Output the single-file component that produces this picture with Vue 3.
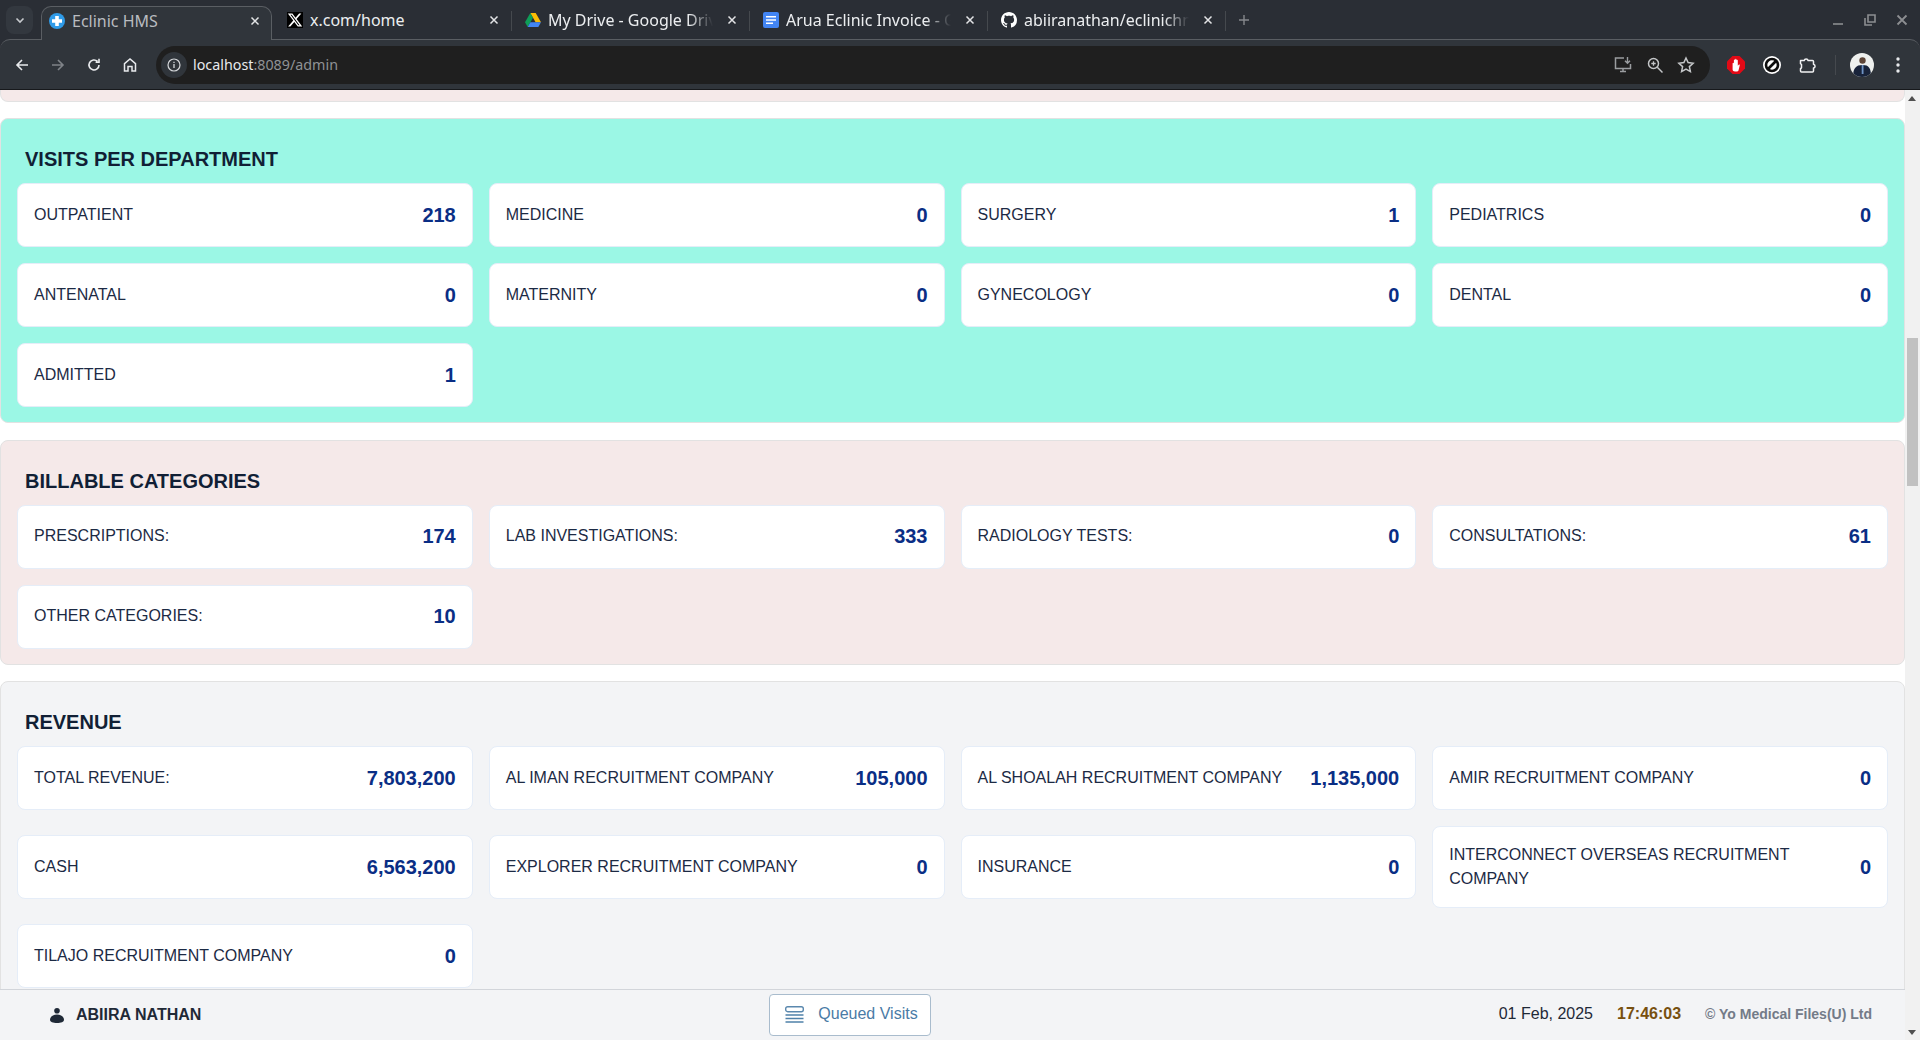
<template>
	<div class="window">
		<header class="chrome">
			<div class="tab-strip">
				<button class="tab-search">
					<svg width="12" height="12" viewBox="0 0 12 12"><path d="M2.5 4.5 6 8l3.5-3.5" fill="none" stroke="#c7cace" stroke-width="1.6" /></svg>
				</button>
				<div v-for="tab in tabs" :key="tab.title" class="tab" :class="{ active: tab.active }">
					<svg v-if="tab.icon === 'clinic'" class="favicon" viewBox="0 0 16 16">
						<circle cx="8" cy="8" r="8" fill="#2f9be8" />
						<path d="M6.2 3h3.6v3.2H13v3.6H9.8V13H6.2V9.8H3V6.2h3.2z" fill="#fff" />
					</svg>
					<svg v-else-if="tab.icon === 'x'" class="favicon" viewBox="0 0 24 24">
						<rect width="24" height="24" fill="#000" />
						<path d="M18.244 2.25h3.308l-7.227 8.26 8.502 11.24H16.17l-5.214-6.817L4.99 21.75H1.68l7.73-8.835L1.254 2.25H8.08l4.713 6.231zm-1.161 17.52h1.833L7.084 4.126H5.117z" fill="#fff" />
					</svg>
					<svg v-else-if="tab.icon === 'drive'" class="favicon" viewBox="0 0 16 14">
						<path d="M5.3 0h5.4l5.3 9.3h-5.4z" fill="#fbbc04" />
						<path d="M5.3 0 0 9.3l2.7 4.7 5.3-9.3z" fill="#0f9d58" />
						<path d="M2.7 14h10.6l2.7-4.7H5.4z" fill="#4285f4" />
					</svg>
					<svg v-else-if="tab.icon === 'docs'" class="favicon" viewBox="0 0 16 16">
						<rect width="16" height="16" rx="2" fill="#4285f4" />
						<path d="M3 4h10v1.6H3zM3 7.2h10v1.6H3zM3 10.4h7V12H3z" fill="#fff" />
					</svg>
					<svg v-else class="favicon" viewBox="0 0 16 16">
						<path fill="#fff" d="M8 0C3.58 0 0 3.58 0 8c0 3.54 2.29 6.53 5.47 7.59.4.07.55-.17.55-.38 0-.19-.01-.82-.01-1.49-2.01.37-2.53-.49-2.69-.94-.09-.23-.48-.94-.82-1.13-.28-.15-.68-.52-.01-.53.63-.01 1.08.58 1.23.82.72 1.21 1.87.87 2.33.66.07-.52.28-.87.51-1.07-1.78-.2-3.64-.89-3.64-3.95 0-.87.31-1.59.82-2.15-.08-.2-.36-1.02.08-2.12 0 0 .67-.21 2.2.82.64-.18 1.32-.27 2-.27.68 0 1.36.09 2 .27 1.53-1.04 2.2-.82 2.2-.82.44 1.1.16 1.92.08 2.12.51.56.82 1.27.82 2.15 0 3.07-1.87 3.75-3.65 3.95.29.25.54.73.54 1.48 0 1.07-.01 1.93-.01 2.2 0 .21.15.46.55.38A8.013 8.013 0 0016 8c0-4.42-3.58-8-8-8z" />
					</svg>
					<span class="tab-title" :class="{ fade: tab.fade }">{{ tab.title }}</span>
					<svg class="tab-close" width="10" height="10" viewBox="0 0 10 10"><path d="M1.5 1.5l7 7m0-7l-7 7" stroke="#e3e4e6" stroke-width="1.5" /></svg>
				</div>
				<svg class="new-tab" width="12" height="12" viewBox="0 0 12 12"><path d="M6 1v10M1 6h10" stroke="#85888c" stroke-width="1.4" /></svg>
				<div class="window-controls">
					<svg width="12" height="12" viewBox="0 0 12 12"><path d="M1 10h10" stroke="#8c8e91" stroke-width="1.6" /></svg>
					<svg width="12" height="12" viewBox="0 0 12 12"><path d="M4 1h7v7H4zM1 4v7h7" fill="none" stroke="#8c8e91" stroke-width="1.6" /></svg>
					<svg width="12" height="12" viewBox="0 0 12 12"><path d="M1.5 1.5l9 9m0-9l-9 9" stroke="#8c8e91" stroke-width="1.8" /></svg>
				</div>
			</div>
			<div class="toolbar">
				<div class="nav-buttons">
					<svg width="16" height="16" viewBox="0 0 16 16"><path d="M14 8H3M8 3 3 8l5 5" fill="none" stroke="#e8eaed" stroke-width="1.6" /></svg>
					<svg width="16" height="16" viewBox="0 0 16 16"><path d="M2 8h11M8 3l5 5-5 5" fill="none" stroke="#7f8388" stroke-width="1.6" /></svg>
					<svg width="16" height="16" viewBox="0 0 16 16"><path d="M13 8a5 5 0 1 1-1.5-3.6M13 1.8v3.4H9.6" fill="none" stroke="#e8eaed" stroke-width="1.6" /></svg>
					<svg width="16" height="16" viewBox="0 0 16 16"><path d="M2.5 14V6.6L8 2l5.5 4.6V14H10V9.5H6V14z" fill="none" stroke="#e8eaed" stroke-width="1.5" /></svg>
				</div>
				<div class="omnibox">
					<span class="site-info">
						<svg width="14" height="14" viewBox="0 0 14 14"><circle cx="7" cy="7" r="6" fill="none" stroke="#d5d7da" stroke-width="1.2" /><path d="M7 6v4M7 3.8V5" stroke="#d5d7da" stroke-width="1.3" /></svg>
					</span>
					<span class="url">localhost<span class="url-rest">:8089/admin</span></span>
					<div class="omni-actions">
						<svg width="20" height="20" viewBox="0 0 20 20"><path d="M11 3H2.5v10.5h15V9M7 16.5h6M10 14v2.5" fill="none" stroke="#9a9da0" stroke-width="1.5" /><path d="M14.5 2v6M12 5.8l2.5 2.5L17 5.8" fill="none" stroke="#9a9da0" stroke-width="1.4" /></svg>
						<svg width="18" height="18" viewBox="0 0 18 18"><circle cx="7.5" cy="7.5" r="5" fill="none" stroke="#c4c6c8" stroke-width="1.5" /><path d="M11.3 11.3 16.5 16.5" stroke="#c4c6c8" stroke-width="1.5" /><path d="M5.3 7.5h4.4M7.5 5.3v4.4" stroke="#c4c6c8" stroke-width="1.3" /></svg>
						<svg width="18" height="18" viewBox="0 0 18 18"><path d="M9 2l2.1 4.6 5 .6-3.7 3.4 1 5L9 13.1 4.6 15.6l1-5L1.9 7.2l5-.6z" fill="none" stroke="#c4c6c8" stroke-width="1.5" /></svg>
					</div>
				</div>
				<div class="extensions">
					<svg width="18" height="18" viewBox="0 0 18 18">
						<path d="M5.5 0h7L18 5.5v7L12.5 18h-7L0 12.5v-7z" fill="#e20a16" />
						<path d="M5.6 13.5V7.5c0-1 1.3-1 1.3 0V4.3c0-1 1.3-1 1.3 0V3.5c0-1 1.3-1 1.3 0v1c0-.9 1.3-.9 1.3 0v5.3l.9-1c.6-.6 1.4 0 1 .7L11.5 14.5c-.5.7-1 1-2 1H8c-1.4 0-2.4-.8-2.4-2z" fill="#fff" />
					</svg>
					<svg width="18" height="18" viewBox="0 0 18 18"><circle cx="9" cy="9" r="9" fill="#fff" /><circle cx="9" cy="9" r="6" fill="none" stroke="#0d0d0d" stroke-width="2.6" /><path d="M5 13l8-8" stroke="#0d0d0d" stroke-width="2.6" /></svg>
					<svg width="18" height="18" viewBox="0 0 18 18"><path d="M1.5 4.5h3.7a2 2 0 0 1 3.9 0h4.4a1 1 0 0 1 1 1v2.7a2 2 0 0 1 0 3.9v3a1 1 0 0 1-1 1H2.5a1 1 0 0 1-1-1v-2.5l1-.8V8.5l-1-.8z" fill="none" stroke="#f1f2f3" stroke-width="1.5" stroke-linejoin="round" /></svg>
				</div>
				<span class="toolbar-sep"></span>
				<svg class="avatar" width="24" height="24" viewBox="0 0 24 24">
					<defs><clipPath id="avatar-clip"><circle cx="12" cy="12" r="12" /></clipPath></defs>
					<g clip-path="url(#avatar-clip)">
						<rect width="24" height="24" fill="#eef0ee" />
						<circle cx="12.5" cy="7.5" r="3.2" fill="#5d4436" />
						<path d="M3 24c0-9 3-12 9.5-12S21 15 21 24z" fill="#18233a" />
						<path d="M11.7 12h1.8v9h-1.8z" fill="#6f93c4" />
					</g>
				</svg>
				<svg class="menu-dots" width="4" height="16" viewBox="0 0 4 16"><circle cx="2" cy="2" r="1.7" fill="#e8eaed" /><circle cx="2" cy="8" r="1.7" fill="#e8eaed" /><circle cx="2" cy="14" r="1.7" fill="#e8eaed" /></svg>
			</div>
		</header>

		<div class="viewport">
			<div class="page">
				<main class="content">
					<div class="section-stub"></div>
					<section v-for="section in sections" :key="section.title" class="panel" :class="section.tone">
						<h2 class="panel-title">{{ section.title }}</h2>
						<div class="stat-grid">
							<div v-for="item in section.items" :key="item.label" class="stat-card">
								<span class="stat-label">{{ item.label }}</span>
								<span class="stat-value">{{ item.value }}</span>
							</div>
						</div>
					</section>
				</main>
				<footer class="footer">
					<div class="user">
						<svg width="14" height="15" viewBox="0 0 14 15"><circle cx="7" cy="2.8" r="2.8" fill="#1f2937" /><path d="M7 6.5c3.8 0 7 2.2 7 5.3C14 14 11 15 7 15s-7-1-7-3.2c0-3.1 3.2-5.3 7-5.3z" fill="#1f2937" /></svg>
						<span>ABIIRA NATHAN</span>
					</div>
					<button class="queue-button">
						<svg width="19" height="17" viewBox="0 0 19 17"><rect x=".7" y=".7" width="17.6" height="5" rx="2" fill="none" stroke="#5a88ae" stroke-width="1.4" /><path d="M.5 9h18M.5 12.5h18M.5 16h18" stroke="#4f81a9" stroke-width="1.5" /></svg>
						<span>Queued Visits</span>
					</button>
					<div class="footer-meta">
						<span class="date">01 Feb, 2025</span>
						<span class="time">17:46:03</span>
						<span class="copyright">© Yo Medical Files(U) Ltd</span>
					</div>
				</footer>
			</div>
			<div class="scrollbar">
				<span class="arrow up"></span>
				<span class="thumb"></span>
				<span class="arrow down"></span>
			</div>
		</div>
	</div>
</template>

<script setup>
const tabs = [
	{ title: 'Eclinic HMS', icon: 'clinic', active: true },
	{ title: 'x.com/home', icon: 'x' },
	{ title: 'My Drive - Google Drive', icon: 'drive', fade: true },
	{ title: 'Arua Eclinic Invoice - Google Docs', icon: 'docs', fade: true },
	{ title: 'abiiranathan/eclinichms', icon: 'github', fade: true }
]

const sections = [
	{
		title: 'VISITS PER DEPARTMENT',
		tone: 'teal',
		items: [
			{ label: 'OUTPATIENT', value: '218' },
			{ label: 'MEDICINE', value: '0' },
			{ label: 'SURGERY', value: '1' },
			{ label: 'PEDIATRICS', value: '0' },
			{ label: 'ANTENATAL', value: '0' },
			{ label: 'MATERNITY', value: '0' },
			{ label: 'GYNECOLOGY', value: '0' },
			{ label: 'DENTAL', value: '0' },
			{ label: 'ADMITTED', value: '1' }
		]
	},
	{
		title: 'BILLABLE CATEGORIES',
		tone: 'pink',
		items: [
			{ label: 'PRESCRIPTIONS:', value: '174' },
			{ label: 'LAB INVESTIGATIONS:', value: '333' },
			{ label: 'RADIOLOGY TESTS:', value: '0' },
			{ label: 'CONSULTATIONS:', value: '61' },
			{ label: 'OTHER CATEGORIES:', value: '10' }
		]
	},
	{
		title: 'REVENUE',
		tone: 'grey',
		items: [
			{ label: 'TOTAL REVENUE:', value: '7,803,200' },
			{ label: 'AL IMAN RECRUITMENT COMPANY', value: '105,000' },
			{ label: 'AL SHOALAH RECRUITMENT COMPANY', value: '1,135,000' },
			{ label: 'AMIR RECRUITMENT COMPANY', value: '0' },
			{ label: 'CASH', value: '6,563,200' },
			{ label: 'EXPLORER RECRUITMENT COMPANY', value: '0' },
			{ label: 'INSURANCE', value: '0' },
			{ label: 'INTERCONNECT OVERSEAS RECRUITMENT COMPANY', value: '0' },
			{ label: 'TILAJO RECRUITMENT COMPANY', value: '0' }
		]
	}
]
</script>

<style>
html,
body {
	margin: 0;
	height: 100%;
	overflow: hidden;
	background: #fff;
}
</style>

<style scoped>
.window {
	display: flex;
	flex-direction: column;
	height: 100vh;
	font-family: 'Liberation Sans', Arial, sans-serif;
}

/* browser chrome */
.chrome {
	flex: none;
	background: #2a2e35;
	font-family: 'Noto Sans', sans-serif;
}

.tab-strip {
	display: flex;
	align-items: flex-end;
	height: 39px;
	position: relative;
	z-index: 1;
}

.tab-search {
	align-self: flex-start;
	display: flex;
	align-items: center;
	justify-content: center;
	width: 27px;
	height: 28px;
	margin: 6px 1px 0 6px;
	padding: 0;
	border: 0;
	border-radius: 8px;
	background: #33383f;
}

.tab {
	position: relative;
	box-sizing: border-box;
	display: flex;
	align-items: center;
	width: 238px;
	height: 33px;
	padding: 0 11px 5px 15px;
	color: #eceef0;
	font-size: 16px;
}

.tab::after {
	content: '';
	position: absolute;
	right: -2px;
	top: 5px;
	height: 20px;
	width: 1px;
	background: #45494e;
}

.tab.active {
	margin-bottom: -1px;
	height: 34px;
	background: #30353b;
	color: #b9bcc0;
	border: 1px solid #5a5e63;
	border-bottom: 0;
	border-radius: 10px 10px 0 0;
	width: 231px;
	margin-left: 7px;
	padding-left: 7px;
	padding-bottom: 6px;
}

.tab.active::after {
	display: none;
}

.favicon {
	flex: none;
	width: 16px;
	height: 16px;
	margin-right: 7px;
}

.tab-title {
	flex: 1;
	min-width: 0;
	overflow: hidden;
	white-space: nowrap;
}

.tab-title.fade {
	-webkit-mask-image: linear-gradient(90deg, #000 85%, transparent 100%);
	mask-image: linear-gradient(90deg, #000 85%, transparent 100%);
}

.tab-close {
	flex: none;
	margin-left: 14px;
}

.new-tab {
	margin: 0 0 13px 14px;
}

.window-controls {
	align-self: flex-start;
	display: flex;
	gap: 20px;
	margin: 14px 12px 0 auto;
}

.toolbar {
	box-sizing: border-box;
	display: flex;
	align-items: center;
	height: 51px;
	background: #30353b;
	border-top: 1px solid #5a5e63;
	border-bottom: 1px solid #17191c;
	border-radius: 10px 10px 0 0;
}

.nav-buttons {
	display: flex;
	gap: 20px;
	margin-left: 14px;
}

.omnibox {
	display: flex;
	align-items: center;
	width: 1554px;
	height: 38px;
	margin-left: 18px;
	background: #1f1f1f;
	border-radius: 19px;
}

.site-info {
	display: flex;
	align-items: center;
	justify-content: center;
	width: 26px;
	height: 26px;
	margin-left: 5px;
	border-radius: 50%;
	background: #30353b;
}

.url {
	margin: 0 0 1px 6px;
	font-size: 14.3px;
	color: #e8eaed;
}

.url-rest {
	color: #8f9295;
}

.omni-actions {
	display: flex;
	align-items: center;
	gap: 13px;
	margin-left: auto;
	margin-right: 15.5px;
}

.extensions {
	display: flex;
	align-items: center;
	gap: 18px;
	margin-left: 17px;
}

.toolbar-sep {
	width: 1px;
	height: 20px;
	margin-left: 18px;
	background: #45494e;
}

.avatar {
	margin-left: 14px;
}

.menu-dots {
	margin-left: 22px;
}

/* page */
.viewport {
	flex: 1;
	display: flex;
	min-height: 0;
}

.page {
	flex: 1;
	min-width: 0;
	display: flex;
	flex-direction: column;
}

.content {
	flex: 1;
	min-height: 0;
	overflow: hidden;
}

.section-stub {
	box-sizing: border-box;
	height: 12px;
	margin-bottom: 16px;
	background: #f5e9e9;
	border: 1px solid #e2e2e2;
	border-top: 0;
	border-radius: 0 0 8px 8px;
}

.panel {
	box-sizing: border-box;
	margin-bottom: 16.5px;
	padding: 16px 16px 15px;
	border: 1px solid #e2e2e2;
	border-radius: 8px;
}

.panel.teal {
	background: #9bf7e5;
}

.panel.pink {
	background: #f5e9e9;
}

.panel.grey {
	background: #f3f4f6;
}

.panel-title {
	margin: 12px 8px;
	font-size: 20px;
	line-height: 24px;
	font-weight: 700;
	color: #111f35;
}

.stat-grid {
	display: grid;
	grid-template-columns: repeat(4, 1fr);
	gap: 16px;
	align-items: center;
}

.stat-card {
	box-sizing: border-box;
	display: flex;
	align-items: center;
	justify-content: space-between;
	gap: 24px;
	min-height: 64px;
	padding: 15.5px 16px;
	background: #fff;
	border: 1px solid #e5edf8;
	border-radius: 8px;
}

.stat-label {
	font-size: 16px;
	line-height: 24.5px;
	color: #1c2a44;
}

.stat-value {
	flex: none;
	font-size: 20px;
	font-weight: 700;
	color: #0a2e85;
}

.footer {
	flex: none;
	box-sizing: border-box;
	display: flex;
	align-items: center;
	height: 51px;
	padding: 0 33px 0 50px;
	background: #f3f4f6;
	border-top: 1px solid #d2d5da;
}

.user {
	display: flex;
	align-items: center;
	gap: 12px;
	font-size: 16px;
	font-weight: 700;
	color: #1f2937;
}

.queue-button {
	display: flex;
	align-items: center;
	gap: 14px;
	box-sizing: border-box;
	width: 162px;
	height: 42px;
	margin-left: 568px;
	padding: 0 0 2px 15px;
	background: #fff;
	border: 1px solid #a9bccd;
	border-radius: 4px;
	font: 16px 'Liberation Sans', Arial, sans-serif;
	color: #4a7ba6;
}

.footer-meta {
	display: flex;
	align-items: center;
	gap: 24px;
	margin: 0 0 2px auto;
}

.date {
	font-size: 16px;
	color: #1f2937;
}

.time {
	font-size: 16px;
	font-weight: 700;
	color: #78500f;
}

.copyright {
	font-size: 14px;
	font-weight: 700;
	color: #737b88;
}

/* scrollbar */
.scrollbar {
	flex: none;
	position: relative;
	width: 15px;
	background: #f1f1f1;
}

.thumb {
	position: absolute;
	top: 248px;
	left: 2px;
	width: 11px;
	height: 148px;
	background: #c1c1c1;
}

.arrow {
	position: absolute;
	left: 3px;
	width: 0;
	height: 0;
	border-left: 4.5px solid transparent;
	border-right: 4.5px solid transparent;
}

.arrow.up {
	top: 6px;
	border-bottom: 5px solid #505050;
}

.arrow.down {
	bottom: 5px;
	border-top: 5px solid #505050;
}
</style>
